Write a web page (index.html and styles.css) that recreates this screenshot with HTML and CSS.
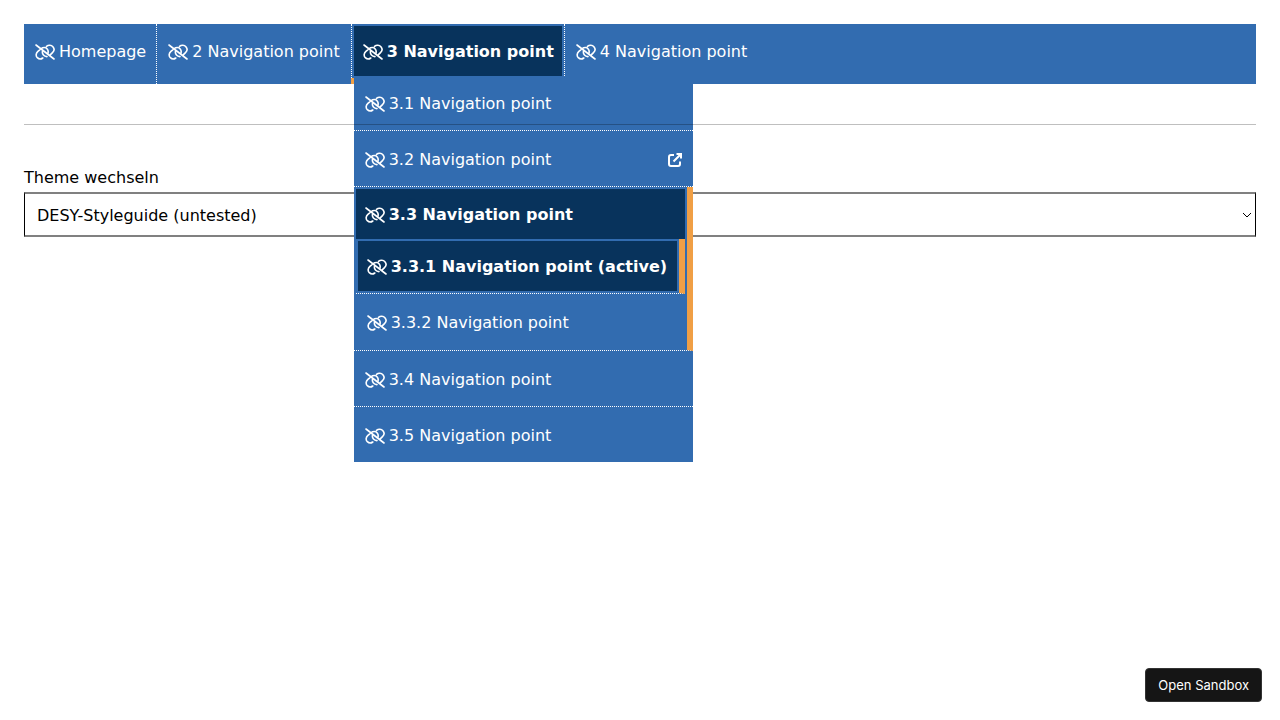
FILE: index.html
```html
<!DOCTYPE html>
<html lang="en">
<head>
<meta charset="utf-8">
<meta name="viewport" content="width=device-width, initial-scale=1">
<title>Navigation</title>
<link rel="stylesheet" href="styles.css">
</head>
<body>
<svg class="sprite" aria-hidden="true">
  <symbol id="unlink" viewBox="0 0 20 16"><path d="M1 1L19 15M4.800 5.800L2.900 7.400C.800 9.400 .600 12 2.300 13.700C3.900 15.200 6.200 15.200 7.800 14M6.300 4.600C8.300 2.900 10.800 3.200 12.200 4.900C13.300 6.200 13.400 7.800 12.900 9.400M7.400 7.500C7.100 10.200 9 12.700 12 12.600M11.500 2.400C13.500 .700 16.300 .900 17.900 2.800C19.500 4.700 19.300 7 17.500 8.600L15.200 10.900"/></symbol>
</svg>
<nav class="nav" aria-label="Main">
  <ul class="bar">
    <li class="item"><a class="link" href="#"><svg class="icon"><use href="#unlink"/></svg>Homepage</a></li>
    <li class="item"><a class="link" href="#"><svg class="icon"><use href="#unlink"/></svg>2 Navigation point</a></li>
    <li class="item item-open"><a class="link link-active" href="#"><svg class="icon"><use href="#unlink"/></svg>3 Navigation point</a>
      <ul class="menu">
        <li class="entry"><a class="link" href="#"><svg class="icon"><use href="#unlink"/></svg>3.1 Navigation point</a></li>
        <li class="entry"><a class="link" href="#"><svg class="icon"><use href="#unlink"/></svg>3.2 Navigation point<svg class="external" viewBox="0 0 14 14"><path d="M6 2H3Q1 2 1 4V11Q1 13 3 13H10Q12 13 12 11V8.500M5.500 8.500L12.500 1.500M8.500 1H13V5.500"/></svg></a></li>
        <li class="entry entry-open"><a class="link link-active" href="#"><svg class="icon"><use href="#unlink"/></svg>3.3 Navigation point</a>
          <ul class="submenu">
            <li class="subentry subentry-open"><a class="link link-active" href="#" aria-current="page"><svg class="icon"><use href="#unlink"/></svg>3.3.1 Navigation point (active)</a></li>
            <li class="subentry"><a class="link" href="#"><svg class="icon"><use href="#unlink"/></svg>3.3.2 Navigation point</a></li>
          </ul>
        </li>
        <li class="entry"><a class="link" href="#"><svg class="icon"><use href="#unlink"/></svg>3.4 Navigation point</a></li>
        <li class="entry"><a class="link" href="#"><svg class="icon"><use href="#unlink"/></svg>3.5 Navigation point</a></li>
      </ul>
    </li>
    <li class="item"><a class="link" href="#"><svg class="icon"><use href="#unlink"/></svg>4 Navigation point</a></li>
  </ul>
</nav>
<hr class="rule">
<div class="field">
  <label class="label" for="theme">Theme wechseln</label>
  <div class="select-wrap">
    <select class="select" id="theme"><option>DESY-Styleguide (untested)</option></select>
    <svg class="chevron" viewBox="0 0 10 6"><path d="M1 1L5 5L9 1"/></svg>
  </div>
</div>
<button class="sandbox" type="button">Open Sandbox</button>
</body>
</html>
```
FILE: styles.css
```css
* { box-sizing: border-box; }
body {
  min-height: 100vh;
  margin: 0;
  padding: 24px;
  background: #fff;
  color: #000;
  font: 16px/24px Verdana, "DejaVu Sans", sans-serif;
}
ul { list-style: none; margin: 0; padding: 0; }
.sprite { position: absolute; width: 0; height: 0; }
.nav { position: relative; z-index: 1; }
.bar { display: flex; height: 60px; background: #326cb0; }
.item { position: relative; border-right: 1px dotted #fff; }
.item:last-child { border-right: 0; }
.link {
  display: flex;
  align-items: center;
  gap: 4px;
  padding: 16px 11px 14px;
  color: #fff;
  text-decoration: none;
  white-space: nowrap;
}
.item:first-child > .link { padding-right: 10px; }
.link-active { background: #08335c; font-weight: bold; }
.icon {
  width: 20px;
  height: 16px;
  flex: none;
  fill: none;
  stroke: currentColor;
  stroke-width: 1.6;
  stroke-linecap: round;
}
.item-open { align-self: flex-start; padding: 2px 2px 0; }
.item-open::before {
  content: "";
  position: absolute;
  left: -1px;
  bottom: -8px;
  width: 4px;
  height: 6px;
  background: #f09f45;
}
.item-open > .link { padding: 14px 8px 12px 9px; }
.menu {
  position: absolute;
  z-index: 1;
  top: 54px;
  left: 2px;
  width: 339px;
  background: #326cb0;
}
.entry { border-bottom: 1px dotted #fff; }
.entry:last-child { border-bottom: 0; }
.entry > .link { padding: 17px 11px 14px; }
.entry:first-child > .link { padding: 14px 11px; }
.entry-open { padding: 2px 2px 0; border-right: 6px solid #f09f45; }
.entry-open > .link-active { padding: 14px 9px 12px; }
.external {
  width: 14px;
  height: 14px;
  margin-left: auto;
  fill: none;
  stroke: currentColor;
  stroke-width: 2;
}
.subentry { border-bottom: 1px dotted #fff; }
.subentry:last-child { border-bottom: 0; }
.subentry-open { padding: 2px; border-right: 6px solid #f09f45; }
.subentry-open > .link { padding: 14px 9px 12px; }
.subentry:last-child > .link { padding: 17px 11px 15px; }
.rule {
  position: relative;
  z-index: 2;
  height: 1px;
  margin: 40px 0;
  border: 0;
  background: rgba(0, 0, 0, 0.25);
}
.label { display: block; padding-top: 1px; margin-bottom: 2px; }
.select-wrap { position: relative; }
.select {
  display: block;
  width: 100%;
  height: 45px;
  padding: 2px 12px 0;
  border: 1px solid #000;
  border-top: 2px solid #808080;
  border-bottom: 2px solid #808080;
  border-radius: 0;
  appearance: none;
  background: #fff;
  color: #000;
  font: inherit;
}
.chevron {
  position: absolute;
  right: 4px;
  top: 20px;
  width: 10px;
  height: 6px;
  fill: none;
  stroke: #000;
  pointer-events: none;
}
.sandbox {
  position: fixed;
  right: 18px;
  bottom: 18px;
  height: 34px;
  padding: 0 12px;
  border: 1px solid #333;
  border-radius: 4px;
  background: #151515;
  color: #fff;
  font: 13px/16px Inter, sans-serif;
}
```
